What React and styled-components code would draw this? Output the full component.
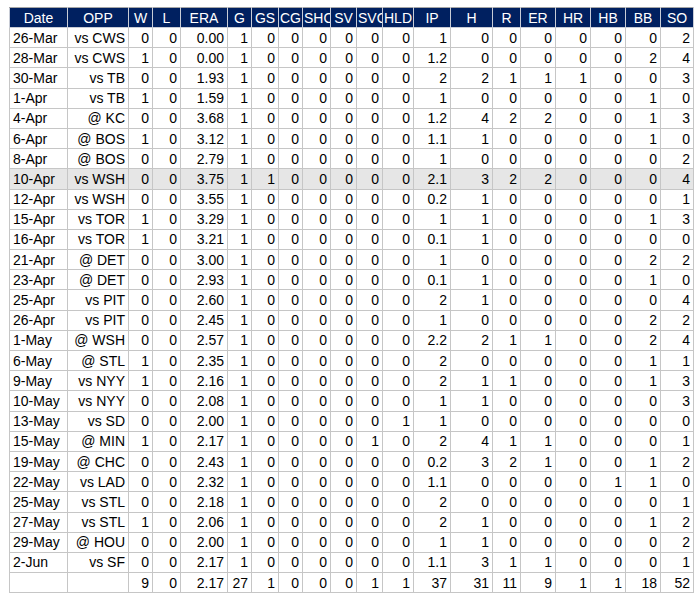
import React from "react";
import styled, { createGlobalStyle } from "styled-components";

const GlobalStyle = createGlobalStyle`
  html, body {
    margin: 0;
    padding: 0;
    background: #ffffff;
  }
  body {
    font-family: "Liberation Sans", Arial, sans-serif;
  }
`;

const Page = styled.div`
  padding: 7px 0 0 9px;
`;

const Table = styled.table`
  width: 684px;
  table-layout: fixed;
  border-collapse: collapse;
  border: 1px solid #a6a6a6;
  font-size: 14px;
  color: #000;
`;

const HeadRow = styled.tr`
  height: 20px;
  background: #002060;
`;

const HeadCell = styled.th`
  padding: 0 1px;
  border: 1px solid #c8ccd6;
  border-top-color: #a6a6a6;
  color: #ffffff;
  font-weight: normal;
  text-align: center;
  white-space: nowrap;
  overflow: hidden;
  line-height: 18px;
`;

const Row = styled.tr`
  height: 20.2px;
  background: ${(p) => (p.$highlight ? "#e6e6e6" : "#ffffff")};
`;

const Cell = styled.td`
  padding: 0 3px;
  border: 1px solid #c6c6c6;
  text-align: ${(p) => p.$align || "right"};
  white-space: nowrap;
  overflow: hidden;
  line-height: 18px;
`;

const widths = [58, 61, 24, 28, 47, 24, 27, 24, 28, 26, 26, 31, 37, 42, 28, 35, 35, 35, 35, 33];
const headers = ["Date", "OPP", "W", "L", "ERA", "G", "GS", "CG", "SHO", "SV", "SVO", "HLD", "IP", "H", "R", "ER", "HR", "HB", "BB", "SO"];

const games = [
  "26-Mar|vs CWS|0 0 0.00 1 0 0 0 0 0 0 1 0 0 0 0 0 0 2",
  "28-Mar|vs CWS|1 0 0.00 1 0 0 0 0 0 0 1.2 0 0 0 0 0 2 4",
  "30-Mar|vs TB|0 0 1.93 1 0 0 0 0 0 0 2 2 1 1 1 0 0 3",
  "1-Apr|vs TB|1 0 1.59 1 0 0 0 0 0 0 1 0 0 0 0 0 1 0",
  "4-Apr|@ KC|0 0 3.68 1 0 0 0 0 0 0 1.2 4 2 2 0 0 1 3",
  "6-Apr|@ BOS|1 0 3.12 1 0 0 0 0 0 0 1.1 1 0 0 0 0 1 0",
  "8-Apr|@ BOS|0 0 2.79 1 0 0 0 0 0 0 1 0 0 0 0 0 0 2",
  "10-Apr|vs WSH|0 0 3.75 1 1 0 0 0 0 0 2.1 3 2 2 0 0 0 4",
  "12-Apr|vs WSH|0 0 3.55 1 0 0 0 0 0 0 0.2 1 0 0 0 0 0 1",
  "15-Apr|vs TOR|1 0 3.29 1 0 0 0 0 0 0 1 1 0 0 0 0 1 3",
  "16-Apr|vs TOR|1 0 3.21 1 0 0 0 0 0 0 0.1 1 0 0 0 0 0 0",
  "21-Apr|@ DET|0 0 3.00 1 0 0 0 0 0 0 1 0 0 0 0 0 2 2",
  "23-Apr|@ DET|0 0 2.93 1 0 0 0 0 0 0 0.1 1 0 0 0 0 1 0",
  "25-Apr|vs PIT|0 0 2.60 1 0 0 0 0 0 0 2 1 0 0 0 0 0 4",
  "26-Apr|vs PIT|0 0 2.45 1 0 0 0 0 0 0 1 0 0 0 0 0 2 2",
  "1-May|@ WSH|0 0 2.57 1 0 0 0 0 0 0 2.2 2 1 1 0 0 2 4",
  "6-May|@ STL|1 0 2.35 1 0 0 0 0 0 0 2 0 0 0 0 0 1 1",
  "9-May|vs NYY|1 0 2.16 1 0 0 0 0 0 0 2 1 1 0 0 0 1 3",
  "10-May|vs NYY|0 0 2.08 1 0 0 0 0 0 0 1 1 0 0 0 0 0 3",
  "13-May|vs SD|0 0 2.00 1 0 0 0 0 0 1 1 0 0 0 0 0 0 0",
  "15-May|@ MIN|1 0 2.17 1 0 0 0 0 1 0 2 4 1 1 0 0 0 1",
  "19-May|@ CHC|0 0 2.43 1 0 0 0 0 0 0 0.2 3 2 1 0 0 1 2",
  "22-May|vs LAD|0 0 2.32 1 0 0 0 0 0 0 1.1 0 0 0 0 1 1 0",
  "25-May|vs STL|0 0 2.18 1 0 0 0 0 0 0 2 0 0 0 0 0 0 1",
  "27-May|vs STL|1 0 2.06 1 0 0 0 0 0 0 2 1 0 0 0 0 1 2",
  "29-May|@ HOU|0 0 2.00 1 0 0 0 0 0 0 1 1 0 0 0 0 0 2",
  "2-Jun|vs SF|0 0 2.17 1 0 0 0 0 0 0 1.1 3 1 1 0 0 0 1",
].map((line) => {
  const [date, opp, stats] = line.split("|");
  return { date, opp, stats: stats.split(" ") };
});

const totals = "9 0 2.17 27 1 0 0 0 1 1 37 31 11 9 1 1 18 52".split(" ");

export default function App() {
  return (
    <Page>
      <GlobalStyle />
      <Table>
        <colgroup>
          {widths.map((w, i) => (
            <col key={i} style={{ width: w }} />
          ))}
        </colgroup>
        <thead>
          <HeadRow>
            {headers.map((h) => (
              <HeadCell key={h}>{h}</HeadCell>
            ))}
          </HeadRow>
        </thead>
        <tbody>
          {games.map((g) => (
            <Row key={g.date} $highlight={g.date === "10-Apr"}>
              <Cell $align="left">{g.date}</Cell>
              <Cell>{g.opp}</Cell>
              {g.stats.map((s, i) => (
                <Cell key={i}>{s}</Cell>
              ))}
            </Row>
          ))}
          <Row>
            <Cell $align="left" />
            <Cell />
            {totals.map((s, i) => (
              <Cell key={i}>{s}</Cell>
            ))}
          </Row>
        </tbody>
      </Table>
    </Page>
  );
}
